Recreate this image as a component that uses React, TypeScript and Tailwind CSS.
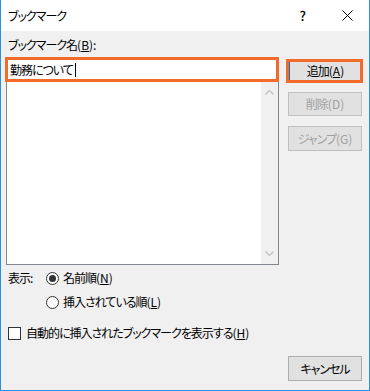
import React from "react";

const FONT = "font-['Yu_Gothic_UI','Noto_Sans_CJK_JP',sans-serif] [font-feature-settings:'palt'] tracking-[-1px]";

// access key suffix like "(B)" with normal latin spacing
function Key({ k, u = true }: { k: string; u?: boolean }) {
  return (
    <span className="tracking-normal">
      (<span className={u ? "underline" : ""}>{k}</span>)
    </span>
  );
}

function Chevron({ up }: { up?: boolean }) {
  return (
    <svg width="9" height="5" viewBox="0 0 9 5" className="block">
      <polyline
        points={up ? "0.5,4.5 4.5,0.5 8.5,4.5" : "0.5,0.5 4.5,4.5 8.5,0.5"}
        fill="none"
        stroke="#c5c5c5"
        strokeWidth="1.4"
      />
    </svg>
  );
}

function Radio({ checked }: { checked?: boolean }) {
  return (
    <span className="flex h-[13px] w-[13px] shrink-0 items-center justify-center rounded-full border border-[#333] bg-white">
      {checked && <span className="h-[7px] w-[7px] rounded-full bg-[#333]" />}
    </span>
  );
}

export default function App() {
  return (
    <div className={`flex h-[391px] w-[370px] flex-col overflow-hidden border-x border-b border-[#2b8fdc] bg-[#f0f0f0] text-[12px] leading-[16px] text-black ${FONT}`}>
      {/* title bar */}
      <div className="flex h-[31px] shrink-0 items-center bg-white pl-[7px]">
        <span className="pt-[1px]">ブックマーク</span>
        <span className="ml-auto mr-[37px] pt-[1px] text-[13px] font-medium">?</span>
        <svg width="11" height="11" viewBox="0 0 11 11" className="mr-[16px]">
          <path d="M0.5 0.5 L10.5 10.5 M10.5 0.5 L0.5 10.5" stroke="#000" strokeWidth="1" />
        </svg>
      </div>

      {/* body */}
      <div className="flex flex-1 flex-col px-[4px] pt-[6px]">
        <div className="flex items-start">
          {/* left column */}
          <div className="flex w-[274px] flex-col">
            <div className="pl-[3px]">
              ブックマーク名<Key k="B" /><span className="tracking-normal">:</span>
            </div>
            <div className="mt-[4px] flex h-[25px] items-center border-[3px] border-[#f26b2a] bg-white pl-[2px]">
              <span>勤務について</span>
              <span className="ml-[2px] h-[14px] w-[1px] bg-black" />
            </div>
            <div className="ml-[1px] flex h-[183px] w-[273px] border border-t-0 border-[#828790] bg-white">
              <div className="flex-1" />
              <div className="flex w-[17px] flex-col items-center justify-between bg-[#f0f0f0] pb-[8px] pt-[8px]">
                <Chevron up />
                <Chevron />
              </div>
            </div>
          </div>

          {/* right column */}
          <div className="ml-[7px] flex flex-col pt-[22px]">
            <div className="h-[24px] w-[77px] border-[3px] border-[#f26b2a]">
              <div className="flex h-full w-full items-center justify-center border-l border-[#0078d7] bg-[#e1e1e1] pl-[1px]">
                追加<Key k="A" />
              </div>
            </div>
            <div className="ml-[2px] mt-[9px] flex h-[24px] w-[74px] items-center justify-center border border-[#bfbfbf] bg-[#e1e1e1] text-[#a0a0a0]">
              削除<Key k="D" u={false} />
            </div>
            <div className="ml-[2px] mt-[10px] flex h-[25px] w-[74px] items-center justify-center border border-[#bfbfbf] bg-[#e1e1e1] text-[#a0a0a0]">
              ジャンプ<Key k="G" u={false} />
            </div>
          </div>
        </div>

        {/* sort options */}
        <div className="mt-[5px] flex items-start pl-[3px]">
          <span className="w-[38px]">表示:</span>
          <div className="flex flex-col">
            <label className="flex h-[16px] items-center gap-[4px]">
              <Radio checked />
              <span>名前順<Key k="N" /></span>
            </label>
            <label className="mt-[8px] flex h-[16px] items-center gap-[4px]">
              <Radio />
              <span>挿入されている順<Key k="L" /></span>
            </label>
          </div>
        </div>

        <label className="mt-[15px] flex h-[16px] items-center gap-[5px] pl-[3px]">
          <span className="h-[13px] w-[13px] shrink-0 border border-[#333] bg-white" />
          <span>
            自動的に挿入されたブックマークを表示する<Key k="H" />
          </span>
        </label>

        <div className="mt-[15px] flex justify-end pr-[3px]">
          <div className="flex h-[25px] w-[74px] items-center justify-center border border-[#adadad] bg-[#e1e1e1]">
            キャンセル
          </div>
        </div>
      </div>
    </div>
  );
}
